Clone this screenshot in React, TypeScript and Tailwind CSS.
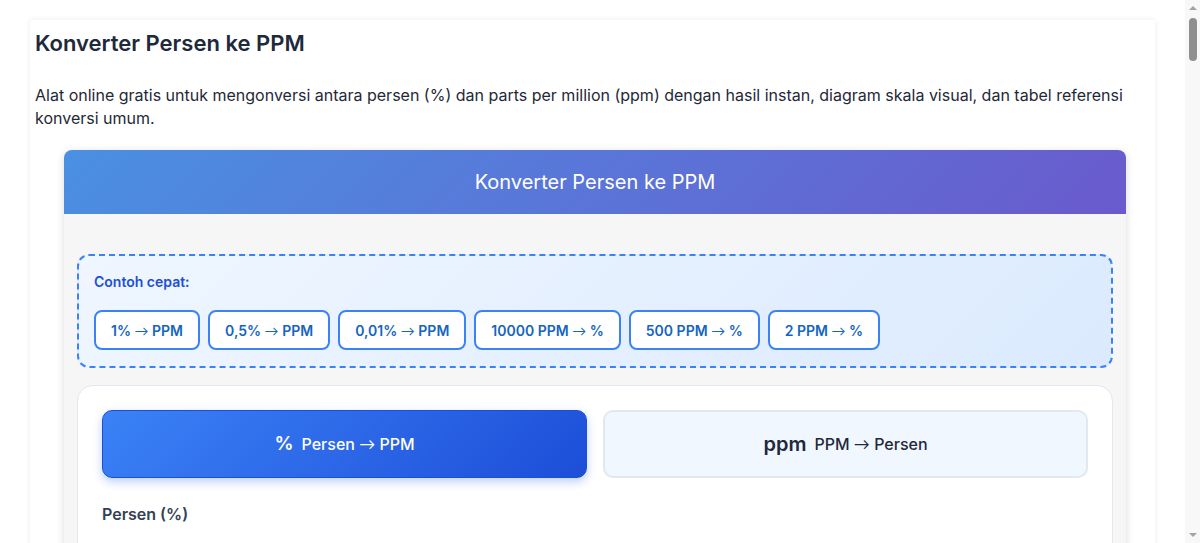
import React, { useState } from 'react';

const examples: [string, string][] = [
    ['1%', 'PPM'],
    ['0,5%', 'PPM'],
    ['0,01%', 'PPM'],
    ['10000 PPM', '%'],
    ['500 PPM', '%'],
    ['2 PPM', '%'],
];

const Arrow = () => <span className="font-['Lato',sans-serif] font-normal">→</span>;

export default function App() {
    const [mode, setMode] = useState<'pct' | 'ppm'>('pct');
    const [value, setValue] = useState('1');

    const activeTab =
        'flex h-[68px] items-center justify-center gap-2 rounded-[10px] border border-[#1d4ed8] bg-[linear-gradient(135deg,#3b82f6,#1d4ed8)] text-white shadow-[0_4px_10px_rgba(37,99,235,0.3)]';
    const idleTab =
        'flex h-[68px] items-center justify-center gap-2 rounded-[10px] border-2 border-[#e2e8f0] bg-[#f0f7ff] text-[#1e293b]';

    return (
        <div className="flex min-h-screen bg-white font-['Inter',sans-serif] text-[#1f2937]">
            <main className="min-w-0 flex-1 pb-10">
                <div className="mx-[30px] mt-5 bg-white px-[5px] pt-[8px] pb-8 shadow-[0_0_6px_rgba(0,0,0,0.08)]">
                    <h1 className="text-[22px] font-semibold leading-[30px] text-[#1e293b]">Konverter Persen ke PPM</h1>
                    <p className="mt-[26px] text-[16px] leading-[23px]">
                        Alat online gratis untuk mengonversi antara persen (%) dan parts per million (ppm) dengan hasil instan, diagram skala visual, dan tabel referensi konversi umum.
                    </p>

                    {/* widget */}
                    <div className="mt-[20px] ml-[29px] w-[1062px] overflow-hidden rounded-t-lg bg-[#f6f6f6] shadow-[0_2px_8px_rgba(0,0,0,0.15)]">
                        <div className="flex h-16 items-center justify-center bg-[linear-gradient(135deg,#4a90e2,#6a5acd)] text-[20px] text-white">
                            Konverter Persen ke PPM
                        </div>

                        <div className="px-[13px] pt-[40px] pb-6">
                            {/* quick examples */}
                            <div className="rounded-xl border-2 border-dashed border-[#3b82f6] bg-[linear-gradient(135deg,#eff6ff,#dbeafe)] pl-[15px] pr-4 pt-[16px] pb-[16px]">
                                <div className="text-[14px] font-semibold leading-5 text-[#1d4ed8]">Contoh cepat:</div>
                                <div className="mt-[18px] flex flex-wrap gap-[8px]">
                                    {examples.map(([a, b]) => (
                                        <button
                                            key={a + b}
                                            className="h-[40px] rounded-lg border-2 border-[#3b82f6] bg-white px-[15px] text-[14px] font-semibold text-[#1565c0]"
                                        >
                                            {a} <Arrow /> {b}
                                        </button>
                                    ))}
                                </div>
                            </div>

                            {/* converter card */}
                            <div className="mt-[17px] rounded-2xl border border-[#e2e8f0] bg-white p-6">
                                <div className="grid grid-cols-2 gap-4">
                                    <button onClick={() => setMode('pct')} className={mode === 'pct' ? activeTab : idleTab}>
                                        <span className="text-[19px] font-semibold">%</span>
                                        <span className="text-[16px] font-medium">
                                            Persen <Arrow /> PPM
                                        </span>
                                    </button>
                                    <button onClick={() => setMode('ppm')} className={mode === 'ppm' ? activeTab : idleTab}>
                                        <span className="text-[20px] font-semibold">ppm</span>
                                        <span className="text-[16px] font-medium">
                                            PPM <Arrow /> Persen
                                        </span>
                                    </button>
                                </div>

                                <label className="mt-[24px] block text-[16px] font-semibold text-[#334155]">
                                    {mode === 'pct' ? 'Persen (%)' : 'PPM'}
                                </label>
                                <input
                                    value={value}
                                    onChange={(e) => setValue(e.target.value)}
                                    className="mt-[22px] h-12 w-full rounded-lg border-2 border-[#e2e8f0] px-4 text-[16px] outline-none"
                                />
                                <div className="mt-6 rounded-lg bg-[#eff6ff] p-4 text-[16px] font-semibold text-[#1d4ed8]">
                                    {mode === 'pct'
                                        ? `${value}% = ${(parseFloat(value.replace(',', '.')) * 10000 || 0).toLocaleString('id-ID')} PPM`
                                        : `${value} PPM = ${(parseFloat(value.replace(',', '.')) / 10000 || 0).toLocaleString('id-ID')}%`}
                                </div>
                            </div>
                        </div>
                    </div>
                </div>
            </main>

            {/* scrollbar look-alike */}
            <div className="sticky top-0 flex h-[543px] w-[15px] shrink-0 flex-col items-center bg-[#f8f8f8]">
                <div className="mt-[6px] h-0 w-0 border-x-[4px] border-b-[4px] border-x-transparent border-b-[#a3a3a3]" />
                <div className="mt-[8px] h-[43px] w-[8px] rounded-full bg-[#8f8f8f]" />
                <div className="flex-1" />
                <div className="mb-[6px] h-0 w-0 border-x-[4px] border-t-[4px] border-x-transparent border-t-[#a3a3a3]" />
            </div>
        </div>
    );
}
